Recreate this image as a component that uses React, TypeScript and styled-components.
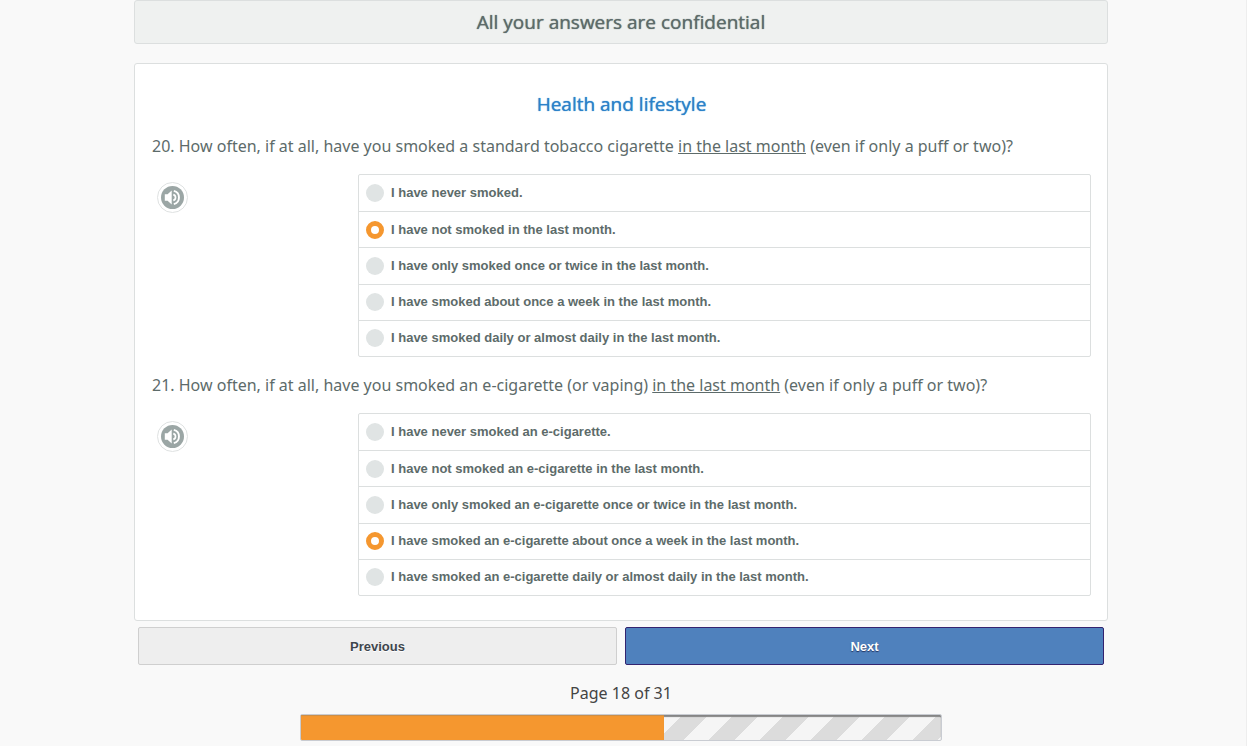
import { useState } from "react";
import styled, { createGlobalStyle } from "styled-components";

const GlobalStyle = createGlobalStyle`
  *, *::before, *::after { box-sizing: border-box; }
  html { background: #f9f9f9; }
  body {
    margin: 0;
    color: #5d6b6a;
    font-family: "Noto Sans", "Open Sans", sans-serif;
    font-size: 16px;
  }
`;

const Page = styled.main`
  min-height: 100vh;
  padding: 0 4px 5px 0;
  border-right: 1px solid #eeeeee;
`;

const Column = styled.div`
  width: 100%;
  max-width: 974px;
  margin: 0 auto;
`;

const Banner = styled.h1`
  margin: 0 0 19px;
  padding: 6px 16px;
  border: 1px solid #dcdfdf;
  border-radius: 3px;
  background: #eff1f0;
  font-family: "Open Sans", sans-serif;
  font-size: 19px;
  font-weight: 400;
  line-height: 30px;
  text-align: center;
  text-shadow: 0 0 1px #5d6b6a;
`;

const Card = styled.section`
  padding: 27px 16px 24px 17px;
  border: 1px solid #dcdfdf;
  border-radius: 3px;
  background: #ffffff;
`;

const SectionTitle = styled.h2`
  margin: 0 0 16px;
  color: #2b82c9;
  font-family: "Open Sans", sans-serif;
  font-size: 19px;
  font-weight: 400;
  line-height: 26px;
  text-align: center;
  text-shadow: 0 0 1px #2b82c9;
`;

const QuestionBlock = styled.fieldset`
  min-width: 0;
  margin: 0;
  padding: 0;
  border: 0;

  & + & { margin-top: 15px; }
`;

const QuestionText = styled.legend`
  padding: 0;
  line-height: 26px;
`;

const QuestionBody = styled.div`
  display: grid;
  grid-template-columns: 206px 1fr;
  align-items: start;
  padding-top: 15px;
`;

const AudioButton = styled.button`
  width: 31px;
  height: 31px;
  margin: 8px 0 0 5px;
  padding: 3px;
  border: 1px solid #dfe2e2;
  border-radius: 50%;
  background: #ffffff;
  cursor: pointer;

  svg { display: block; width: 23px; height: 23px; }
`;

const Options = styled.div`
  display: grid;
  grid-auto-rows: 1fr;
  min-height: 183px;
  border: 1px solid #dcdfdf;
  border-radius: 2px;
`;

const Option = styled.label`
  display: flex;
  align-items: center;
  gap: 7px;
  padding: 0 7px;
  font-family: "Liberation Sans", Arial, sans-serif;
  font-size: 13px;
  font-weight: 700;
  line-height: 20px;
  cursor: pointer;

  & + & { border-top: 1px solid #dcdfdf; }
`;

const Radio = styled.input`
  appearance: none;
  flex: none;
  width: 18px;
  height: 18px;
  margin: 0;
  border-radius: 50%;
  background: #e0e4e4;
  cursor: pointer;

  &:checked {
    border: 5px solid #f5972f;
    background: #ffffff;
  }
`;

const Navigation = styled.nav`
  display: grid;
  grid-template-columns: 1fr 1fr;
  gap: 8px;
  padding: 6px 4px 0;
`;

const NavButton = styled.button<{ $primary?: boolean }>`
  height: 38px;
  border: 1px solid ${(p) => (p.$primary ? "#33236f" : "#cfcfcf")};
  border-radius: 2px;
  background: ${(p) => (p.$primary ? "#4f81bd" : "#eeeeee")};
  color: ${(p) => (p.$primary ? "#ffffff" : "#3f464d")};
  font-family: "Liberation Sans", Arial, sans-serif;
  font-size: 13px;
  font-weight: 700;
  text-shadow: ${(p) => (p.$primary ? "0 1px 1px #22335f" : "0 1px 0 #ffffff")};
  cursor: pointer;
`;

const PageCount = styled.p`
  margin: 15px 0 8px;
  color: #444444;
  line-height: 26px;
  text-align: center;
`;

const Track = styled.div`
  width: 66%;
  height: 27px;
  margin: 0 auto;
  overflow: hidden;
  border: 1px solid #c9ccd2;
  border-radius: 2px;
  background: repeating-linear-gradient(135deg, #f5f5f5 0 18px, #dcdcdc 18px 36px);
  box-shadow: inset 0 2px 1px #858585;
`;

const Fill = styled.div`
  height: 100%;
  background: #f5972f;
  box-shadow: inset 0 1px 1px #c98d4a;
`;

interface Question {
  id: string;
  before: string;
  after: string;
  options: string[];
  selected: number;
}

const questions: Question[] = [
  {
    id: "q20",
    before: "20. How often, if at all, have you smoked a standard tobacco cigarette ",
    after: " (even if only a puff or two)?",
    options: [
      "I have never smoked.",
      "I have not smoked in the last month.",
      "I have only smoked once or twice in the last month.",
      "I have smoked about once a week in the last month.",
      "I have smoked daily or almost daily in the last month.",
    ],
    selected: 1,
  },
  {
    id: "q21",
    before: "21. How often, if at all, have you smoked an e-cigarette (or vaping) ",
    after: " (even if only a puff or two)?",
    options: [
      "I have never smoked an e-cigarette.",
      "I have not smoked an e-cigarette in the last month.",
      "I have only smoked an e-cigarette once or twice in the last month.",
      "I have smoked an e-cigarette about once a week in the last month.",
      "I have smoked an e-cigarette daily or almost daily in the last month.",
    ],
    selected: 3,
  },
];

function SpeakerIcon() {
  return (
    <svg viewBox="0 0 23 23" aria-hidden="true">
      <circle cx="11.5" cy="11.5" r="11.5" fill="#9ba6a5" />
      <path d="M3.8 8.3h2.8L10.7 4.4v14.2l-4.1-3.9H3.8z" fill="#fff" />
      <path d="M12.3 8.6a3 3 0 0 1 0 5.8" fill="none" stroke="#fff" strokeWidth="1.7" />
      <path d="M12.8 4.9a6.8 6.8 0 0 1 0 13.2" fill="none" stroke="#fff" strokeWidth="1.9" />
    </svg>
  );
}

function QuestionField({ question }: { question: Question }) {
  const [selected, setSelected] = useState(question.selected);
  return (
    <QuestionBlock>
      <QuestionText>
        {question.before}
        <u>in the last month</u>
        {question.after}
      </QuestionText>
      <QuestionBody>
        <AudioButton type="button" aria-label="Listen to the question">
          <SpeakerIcon />
        </AudioButton>
        <Options>
          {question.options.map((text, i) => (
            <Option key={text} htmlFor={`${question.id}-${i}`}>
              <Radio
                type="radio"
                id={`${question.id}-${i}`}
                name={question.id}
                checked={selected === i}
                onChange={() => setSelected(i)}
              />
              {text}
            </Option>
          ))}
        </Options>
      </QuestionBody>
    </QuestionBlock>
  );
}

export default function App() {
  const progress = (17 / 30) * 100;
  return (
    <>
      <GlobalStyle />
      <Page>
        <Column>
          <Banner>All your answers are confidential</Banner>
          <Card>
            <SectionTitle>Health and lifestyle</SectionTitle>
            {questions.map((q) => (
              <QuestionField key={q.id} question={q} />
            ))}
          </Card>
          <Navigation>
            <NavButton type="button">Previous</NavButton>
            <NavButton type="button" $primary>Next</NavButton>
          </Navigation>
          <PageCount>Page 18 of 31</PageCount>
          <Track role="progressbar" aria-label="Survey progress" aria-valuenow={Math.round(progress)}>
            <Fill style={{ width: `${progress}%` }} />
          </Track>
        </Column>
      </Page>
    </>
  );
}
